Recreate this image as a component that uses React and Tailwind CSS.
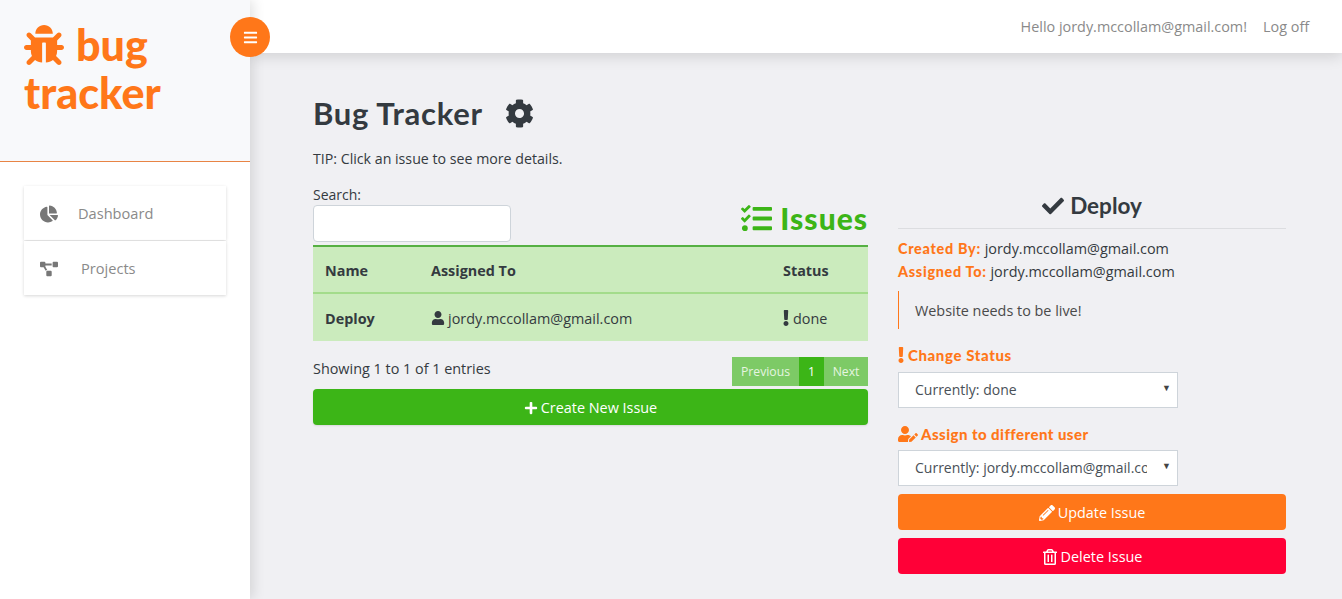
import React from "react";
import { FaBug, FaBars, FaChartPie, FaProjectDiagram, FaCog, FaTasks, FaUser, FaExclamation, FaPlus, FaCheck, FaUserEdit, FaPencilAlt, FaRegTrashAlt } from "react-icons/fa";

const head = "font-['Lato','Noto_Sans',sans-serif]";
const cols = "grid grid-cols-[106px_352px_85px] px-3 items-center pt-[2px]";

function NavItem({ icon, label, gap }) {
  return (
    <div className={`flex items-center h-[54px] pl-[16px] pt-[1px] bg-white shadow-[0_1px_3px_rgba(0,0,0,0.16)] text-[#8a8a8a] text-[14.6px] ${gap}`}>
      <span className="text-[#777] text-[18px]">{icon}</span>
      <span>{label}</span>
    </div>
  );
}

function Choice({ text }) {
  return (
    <div className="relative w-[280px] h-[36px]">
      <select
        defaultValue={text}
        className="appearance-none block w-full h-full bg-white border border-[#ced4da] pl-[16px] pr-[30px] pb-[2px] text-[#495057] text-[14px]"
      >
        <option>{text}</option>
      </select>
      <span className="absolute right-[7px] top-[9px] text-[9px] text-[#444]">▼</span>
    </div>
  );
}

export default function App() {
  return (
    <div className="flex h-[599px] w-[1342px] overflow-hidden bg-[#f0f0f3] text-[#343a40] font-['Open_Sans','Noto_Sans',sans-serif] text-[14.4px]">
      <aside className="relative z-20 w-[250px] shrink-0 bg-white shadow-[3px_0_12px_rgba(0,0,0,0.12)]">
        <div className={`h-[162px] bg-[#f8f9fb] border-b border-[#e88445] pt-[21px] pl-[24px] text-[#ff7719] text-[43px] leading-[48px] font-black tracking-[0px] ${head}`}>
          <div className="flex items-center gap-[12px]">
            <FaBug className="text-[40px]" />
            <span>bug</span>
          </div>
          <div>tracker</div>
        </div>
        <nav className="pt-[24px] pl-[24px] w-[226px] flex flex-col gap-[1px]">
          <NavItem icon={<FaChartPie />} label="Dashboard" gap="gap-[20px]" />
          <NavItem icon={<FaProjectDiagram />} label="Projects" gap="gap-[23px]" />
        </nav>
        <button className="absolute left-[230px] top-[17px] w-[40px] h-[40px] rounded-full bg-[#ff7719] text-white flex items-center justify-center">
          <FaBars className="text-[15px]" />
        </button>
      </aside>

      <div className="flex-1 flex flex-col min-w-0">
        <header className="relative z-10 h-[53px] shrink-0 bg-white shadow-[0_3px_14px_rgba(0,0,0,0.14)] flex items-center justify-end gap-[16px] pr-[32px] text-[#8a8a8a]">
          <span>Hello jordy.mccollam@gmail.com!</span>
          <span className="w-[47px] whitespace-nowrap">Log off</span>
        </header>

        <main className="pl-[63px] pt-[39px]">
          <div className={`flex items-center gap-[22px] h-[42px] text-[31px] font-bold tracking-[0.7px] text-[#343a40] ${head}`}>
            <span>Bug Tracker</span>
            <FaCog className="text-[29px]" />
          </div>
          <p className="mt-[14px] leading-[22px] text-[14.2px]">TIP: Click an issue to see more details.</p>

          <div className="mt-[15px] flex gap-[30px]">
            <section className="w-[555px]">
              <div className="flex justify-between items-end">
                <div>
                  <div className="leading-[20px] h-[20px] text-[14px]">Search:</div>
                  <div className="w-[198px] h-[37px] bg-white border border-[#ced4da] rounded-[4px]" />
                </div>
                <div className={`flex items-center gap-[8px] text-[#3cb517] text-[30px] font-black tracking-[1px] leading-[36px] mb-[6px] ${head}`}>
                  <FaTasks className="text-[31px]" />
                  <span>Issues</span>
                </div>
              </div>
              <div className="mt-[3px] bg-[#cbebbd] border-t-2 border-[#56b043]">
                <div className={`${cols} h-[47px] border-b-2 border-[#a3dc8b] font-bold`}>
                  <span>Name</span><span>Assigned To</span><span>Status</span>
                </div>
                <div className={`${cols} h-[47px]`}>
                  <span className="font-bold">Deploy</span>
                  <span className="flex items-center gap-[3px]"><FaUser className="text-[14px]" />jordy.mccollam@gmail.com</span>
                  <span className="flex items-center gap-[4px]"><FaExclamation className="w-[6px] h-[16px]" />done</span>
                </div>
              </div>
              <div className="flex justify-between items-center mt-[16px] h-[29px]">
                <span className="-mt-[6px]">Showing 1 to 1 of 1 entries</span>
                <div className="flex h-[29px] text-[12.2px] text-[#e6f5e0] items-center">
                  <span className="h-full w-[67px] pt-[2px] flex items-center justify-center bg-[#7dca66]">Previous</span>
                  <span className="h-full w-[25px] pt-[2px] flex items-center justify-center bg-[#3cb517] text-white">1</span>
                  <span className="h-full w-[44px] pt-[2px] flex items-center justify-center bg-[#7dca66]">Next</span>
                </div>
              </div>
              <button className="mt-[3px] pt-[1px] w-full h-[36px] bg-[#3cb517] text-white rounded-[4px] flex items-center justify-center gap-[3px] shadow-[0_1px_2px_rgba(0,0,0,0.1)]">
                <FaPlus className="text-[14px]" /> Create New Issue
              </button>
            </section>

            <section className="w-[388px] mt-[6px]">
              <div className={`h-[38px] border-b border-[#dcdde0] flex items-center justify-center gap-[6px] text-[22.5px] font-bold text-[#343a40] pb-[8px] ${head}`}>
                <FaCheck className="text-[22px]" /> Deploy
              </div>
              <div className="mt-[8px] leading-[23px]">
                <div><b className={`text-[#ff7719] font-black tracking-[0.7px] ${head}`}>Created By:</b> jordy.mccollam@gmail.com</div>
                <div><b className={`text-[#ff7719] font-black tracking-[0.7px] ${head}`}>Assigned To:</b> jordy.mccollam@gmail.com</div>
              </div>
              <div className="mt-[8px] h-[38px] pt-[1px] border-l border-[#ff7719] pl-[16px] flex items-center text-[#4a4a4a]">Website needs to be live!</div>
              <div className={`mt-[16px] h-[20px] flex items-center gap-[4px] text-[#ff7719] font-black text-[15px] tracking-[0.6px] ${head}`}>
                <FaExclamation className="w-[6px] h-[16px]" /> Change Status
              </div>
              <div className="mt-[7px]"><Choice text="Currently: done" /></div>
              <div className={`mt-[16px] h-[20px] flex items-center gap-[3px] text-[#ff7719] font-black text-[15px] tracking-[0.45px] ${head}`}>
                <FaUserEdit className="text-[20px]" /> Assign to different user
              </div>
              <div className="mt-[6px]"><Choice text="Currently: jordy.mccollam@gmail.com" /></div>
              <button className="mt-[8px] pt-[1px] w-full h-[36px] bg-[#ff7719] text-white rounded-[4px] flex items-center justify-center gap-[3px]">
                <FaPencilAlt className="text-[16px]" /> Update Issue
              </button>
              <button className="mt-[8px] pt-[1px] w-full h-[36px] bg-[#ff0037] text-white rounded-[4px] flex items-center justify-center gap-[3px]">
                <FaRegTrashAlt className="text-[16px]" /> Delete Issue
              </button>
            </section>
          </div>
        </main>
      </div>
    </div>
  );
}
